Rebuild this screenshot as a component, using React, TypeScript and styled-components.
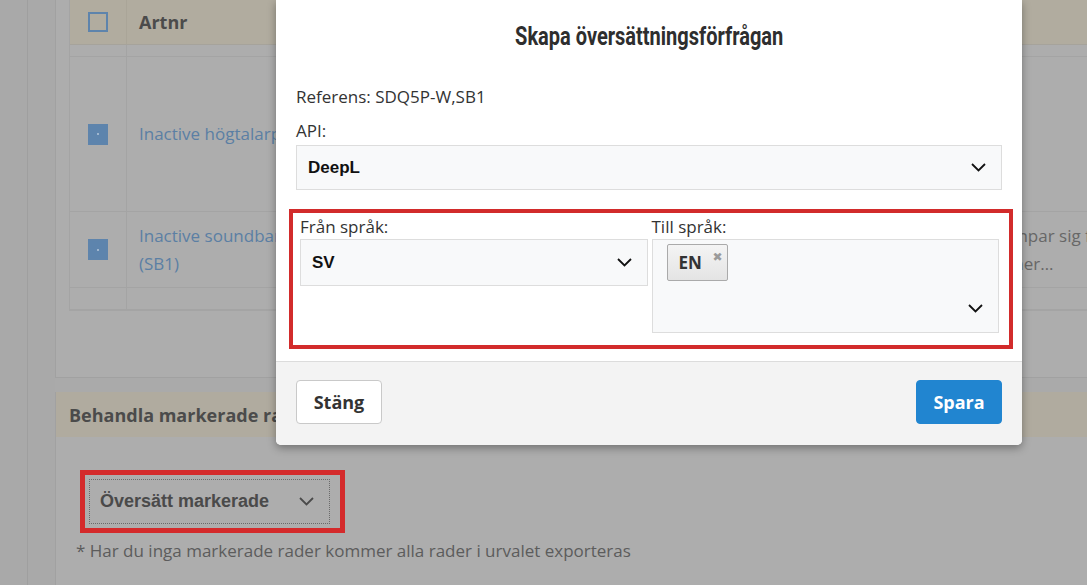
import React from "react";
import styled, { createGlobalStyle } from "styled-components";

const Global = createGlobalStyle`
  html, body { margin: 0; padding: 0; }
  body {
    width: 1087px;
    height: 585px;
    overflow: hidden;
    background: #a9a9a9;
    font-family: "Open Sans", "Liberation Sans", sans-serif;
  }
  * { box-sizing: border-box; }
`;

const Page = styled.div`
  position: relative;
  display: flex;
  width: 1087px;
  height: 585px;
  overflow: hidden;
  background: #a9a9a9;
`;

const Rail = styled.div`
  flex: 0 0 28px;
  border-right: 1px solid #9f9f9f;
`;

const Main = styled.div`
  flex: none;
  width: 1400px;
  margin-left: 27px;
  display: flex;
  flex-direction: column;
  background: #aaaaaa;
`;

const Panel = styled.div`
  background: #adadad;
  border-left: 1px solid #a1a1a1;
  border-bottom: 1px solid #a1a1a1;
  padding: 0 0 66px 13px;
`;

const Table = styled.div`
  border-left: 1px solid #a4a4a4;
  border-bottom: 1px solid #a4a4a4;
`;

const Row = styled.div<{ $h: number; $head?: boolean }>`
  display: grid;
  grid-template-columns: 57px 866px 1fr;
  height: ${(p) => p.$h}px;
  background: ${(p) => (p.$head ? "#b1ac9f" : "#adadad")};
  border-bottom: 1px solid ${(p) => (p.$head ? "#a6a39b" : "#a4a4a4")};
`;

const Cell = styled.div<{ $first?: boolean; $head?: boolean }>`
  display: flex;
  flex-direction: column;
  justify-content: center;
  align-items: ${(p) => (p.$first ? "center" : "flex-start")};
  padding: ${(p) => (p.$first ? "0" : "0 12px")};
  border-right: ${(p) => (p.$first ? `1px solid ${p.$head ? "#aaa598" : "#a4a4a4"}` : "none")};
  font-size: ${(p) => (p.$head ? "18px" : "17px")};
  font-weight: ${(p) => (p.$head ? 700 : 400)};
  color: ${(p) => (p.$head ? "#4b4b4b" : "#5b7fa4")};
  line-height: 28px;
  white-space: nowrap;
`;

const DescCell = styled.div`
  display: flex;
  flex-direction: column;
  justify-content: center;
  padding-left: 15px;
  font-size: 17px;
  line-height: 28px;
  color: #676767;
  white-space: nowrap;
`;

const Check = styled.span<{ $on?: boolean }>`
  display: flex;
  align-items: center;
  justify-content: center;
  width: 20px;
  height: ${(p) => (p.$on ? 21 : 20)}px;
  border: 2px solid #5e84ac;
  background: ${(p) => (p.$on ? "#5d84ad" : "transparent")};
  &::after {
    content: "";
    display: ${(p) => (p.$on ? "block" : "none")};
    width: 2px;
    height: 2px;
    background: #9fb6cf;
  }
`;

const Section = styled.section`
  margin-top: 14px;
  flex: 1;
  background: #adadad;
  border-left: 1px solid #a1a1a1;
`;

const SectionHead = styled.div`
  height: 45px;
  display: flex;
  align-items: center;
  padding-left: 13px;
  background: #b0ab9f;
  font-size: 18px;
  font-weight: 700;
  color: #4b4b4b;
`;

const SectionBody = styled.div`
  padding: 33px 0 0 20px;
`;

const Mark = styled.div`
  display: inline-flex;
  margin-left: 4px;
  padding: 4px 10px 4px 4px;
  border: 5px solid #d42a2b;
`;

const ActionSelect = styled.div`
  width: 241px;
  height: 45px;
  display: flex;
  align-items: center;
  justify-content: space-between;
  padding: 0 15px 0 10px;
  border: 1px dotted #6a6a6a;
  font-family: "Liberation Sans", Arial, sans-serif;
  font-weight: 700;
  font-size: 18px;
  color: #4a4a4a;
`;

const Footnote = styled.p`
  margin: 6px 0 0 0;
  font-size: 17px;
  line-height: 24px;
  color: #5c5c5c;
`;

const Modal = styled.div`
  position: absolute;
  left: 276px;
  top: 0;
  width: 746px;
  background: #fff;
  border-radius: 0 0 5px 5px;
  box-shadow: 0 3px 8px rgba(0, 0, 0, 0.35);
  overflow: hidden;
  color: #333;
`;

const ModalHeader = styled.div`
  padding: 20px 20px 0;
  text-align: center;
`;

const Title = styled.h2`
  margin: 0;
  display: inline-block;
  font-family: Roboto, "Liberation Sans", sans-serif;
  font-size: 26px;
  line-height: 32px;
  font-weight: 700;
  color: #2e2e2e;
  transform: scaleX(0.77);
`;

const ModalBody = styled.div`
  padding: 33px 20px 12px;
`;

const Label = styled.div<{ $gap?: number }>`
  margin-top: ${(p) => p.$gap ?? 0}px;
  font-size: 17px;
  line-height: 24px;
  color: #333;
`;

const SelectBox = styled.div<{ $h: number; $gap?: number }>`
  margin-top: ${(p) => p.$gap ?? 0}px;
  height: ${(p) => p.$h}px;
  display: flex;
  align-items: center;
  justify-content: space-between;
  padding: 0 15px 0 11px;
  background: #f8f9fa;
  border: 1px solid #dddddd;
  font-family: "Liberation Sans", Arial, sans-serif;
  font-weight: 700;
  font-size: 17px;
  color: #111;
`;

const RedFrame = styled.div`
  margin: 19px -11px 0 -7px;
  padding: 2px 10px 12px 7px;
  border: 4px solid #d22b2b;
  display: grid;
  grid-template-columns: 1fr 1fr;
  gap: 4px;
  align-items: start;
`;

const MultiBox = styled.div`
  height: 94px;
  display: flex;
  flex-direction: column;
  justify-content: space-between;
  padding: 4px 15px 19px 14px;
  background: #f8f9fa;
  border: 1px solid #dddddd;
`;

const TagRow = styled.div`
  display: flex;
`;

const Tag = styled.span`
  position: relative;
  display: inline-flex;
  align-items: center;
  height: 37px;
  width: 61px;
  padding: 0 0 0 11px;
  background: linear-gradient(#f4f4f4, #e4e4e4);
  border: 1px solid #aaaaaa;
  border-radius: 2px;
  font-weight: 700;
  font-size: 17px;
  color: #333;
`;

const TagClose = styled.span`
  position: absolute;
  top: 5px;
  right: 4px;
  font-size: 12px;
  line-height: 14px;
  font-weight: 700;
  color: #9a9a9a;
  font-family: "DejaVu Sans", sans-serif;
`;

const ChevronEnd = styled.div`
  display: flex;
  justify-content: flex-end;
`;

const Footer = styled.div`
  display: flex;
  justify-content: space-between;
  padding: 18px 20px 21px;
  background: #f3f3f3;
  border-top: 1px solid #dcdcdc;
`;

const Button = styled.button<{ $primary?: boolean }>`
  height: 44px;
  width: 86px;
  border-radius: 4px;
  border: 1px solid ${(p) => (p.$primary ? "#2185d0" : "#c9c9c9")};
  background: ${(p) => (p.$primary ? "#2185d0" : "#fff")};
  color: ${(p) => (p.$primary ? "#fff" : "#333")};
  font-family: "Open Sans", sans-serif;
  font-weight: 700;
  font-size: 18px;
  padding: 0;
`;

const ChevronSvg = styled.svg`
  width: 15px;
  height: 9px;
  flex: none;
`;

function Chevron({ color = "#111" }: { color?: string }) {
  return (
    <ChevronSvg viewBox="0 0 15 9">
      <polyline points="1,1 7.5,7.5 14,1" fill="none" stroke={color} strokeWidth="1.8" />
    </ChevronSvg>
  );
}

export default function App() {
  return (
    <>
      <Global />
      <Page>
        <Rail />
        <Main>
          <Panel>
            <Table>
              <Row $h={45} $head>
                <Cell $first $head>
                  <Check />
                </Cell>
                <Cell $head>Artnr</Cell>
                <Cell $head />
              </Row>
              <Row $h={12}>
                <Cell $first />
                <Cell />
                <Cell />
              </Row>
              <Row $h={155}>
                <Cell $first>
                  <Check $on />
                </Cell>
                <Cell>Inactive högtalarpaket (SDQ5P-W)</Cell>
                <DescCell />
              </Row>
              <Row $h={76}>
                <Cell $first>
                  <Check $on />
                </Cell>
                <Cell>
                  <span>Inactive soundbar Q-serie</span>
                  <span>(SB1)</span>
                </Cell>
                <DescCell>
                  <span>anpar sig för rummet</span>
                  <span>mer…</span>
                </DescCell>
              </Row>
              <Row $h={22}>
                <Cell $first />
                <Cell />
                <Cell />
              </Row>
            </Table>
          </Panel>
          <Section>
            <SectionHead>Behandla markerade rader</SectionHead>
            <SectionBody>
              <Mark>
                <ActionSelect>
                  <span>Översätt markerade</span>
                  <Chevron color="#4a4a4a" />
                </ActionSelect>
              </Mark>
              <Footnote>* Har du inga markerade rader kommer alla rader i urvalet exporteras</Footnote>
            </SectionBody>
          </Section>
        </Main>

        <Modal>
          <ModalHeader>
            <Title>Skapa översättningsförfrågan</Title>
          </ModalHeader>
          <ModalBody>
            <Label>Referens: SDQ5P-W,SB1</Label>
            <Label $gap={10}>API:</Label>
            <SelectBox $h={45} $gap={2}>
              <span>DeepL</span>
              <Chevron />
            </SelectBox>
            <RedFrame>
              <div>
                <Label>Från språk:</Label>
                <SelectBox $h={47}>
                  <span>SV</span>
                  <Chevron />
                </SelectBox>
              </div>
              <div>
                <Label>Till språk:</Label>
                <MultiBox>
                  <TagRow>
                    <Tag>
                      EN
                      <TagClose>✖</TagClose>
                    </Tag>
                  </TagRow>
                  <ChevronEnd>
                    <Chevron />
                  </ChevronEnd>
                </MultiBox>
              </div>
            </RedFrame>
          </ModalBody>
          <Footer>
            <Button>Stäng</Button>
            <Button $primary>Spara</Button>
          </Footer>
        </Modal>
      </Page>
    </>
  );
}
